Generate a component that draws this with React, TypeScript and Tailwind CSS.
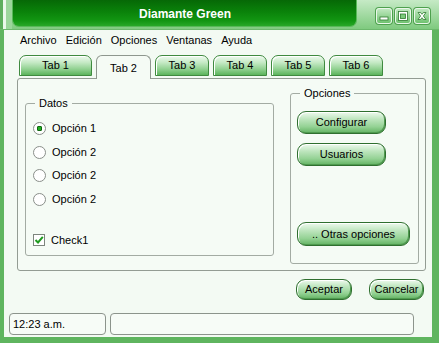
import React from "react";

const font = "font-['Liberation_Sans',Arial,sans-serif]";

function Radio({ checked }: { checked?: boolean }) {
  return (
    <span className="w-[13px] h-[13px] rounded-full border border-[#8a8f8a] bg-white flex items-center justify-center shrink-0">
      {checked && <span className="w-[5px] h-[5px] rounded-[1px] bg-[#22b022] border border-[#116611]" />}
    </span>
  );
}

function GreenButton({ label, w, h }: { label: string; w: string; h: string }) {
  return (
    <div
      className={`${w} ${h} rounded-[9px] border border-[#2f6f2f] bg-[linear-gradient(to_bottom,#eefaee_0%,#bde5bd_35%,#94d294_70%,#62b262_100%)] shadow-[inset_1px_1px_0_#ffffff,inset_-1px_-1px_0_#4f9a4f] flex items-center justify-center text-[11px] text-black`}
    >
      {label}
    </div>
  );
}

function Tab({ label, w, selected }: { label: string; w: string; selected?: boolean }) {
  if (selected) {
    return (
      <div
        className={`${w} h-[24px] -mb-px relative z-10 rounded-t-[6px] border border-b-0 border-[#8e978e] bg-[#f5fbf5] flex items-start justify-center pt-[4px] text-[11px] text-black`}
      >
        {label}
      </div>
    );
  }
  return (
    <div
      className={`${w} h-[21px] rounded-t-[7px] border border-[#3f8a3f] bg-[linear-gradient(to_bottom,#eefaee_0%,#c4e9c4_35%,#8fd08f_70%,#5cb45c_100%)] shadow-[inset_1px_1px_0_#ffffff] flex items-center justify-center text-[11px] text-black`}
    >
      {label}
    </div>
  );
}

function TitleButton({ kind }: { kind: "min" | "max" | "close" }) {
  return (
    <div className="w-[16px] h-[16px] rounded-[3px] border border-[#eaf7ea] bg-[linear-gradient(to_bottom,#bfe8bf,#6fc26f)] shadow-[0_0_0_1px_#4ea04e] flex items-center justify-center">
      <svg width="12" height="12" viewBox="0 0 12 12">
        {kind === "min" && (
          <rect x="2" y="7" width="8" height="3" fill="#ffffff" stroke="#2f7a2f" strokeWidth="0.8" />
        )}
        {kind === "max" && (
          <>
            <rect x="1.5" y="1.5" width="9" height="9" fill="#ffffff" stroke="#2f7a2f" strokeWidth="0.8" />
            <rect x="3.5" y="4" width="5" height="4.5" fill="#7ccb7c" stroke="#2f7a2f" strokeWidth="0.8" />
          </>
        )}
        {kind === "close" && (
          <path
            d="M2 2.5 L4.5 2.5 L6 4.3 L7.5 2.5 L10 2.5 L7.4 6 L10 9.5 L7.5 9.5 L6 7.7 L4.5 9.5 L2 9.5 L4.6 6 Z"
            fill="#ffffff"
            stroke="#2f7a2f"
            strokeWidth="0.8"
          />
        )}
      </svg>
    </div>
  );
}

export default function App() {
  return (
    <div className={`w-[439px] h-[343px] flex flex-col overflow-hidden ${font} bg-[#f3faf3]`}>
      {/* Title bar */}
      <div className="h-[30px] flex bg-[linear-gradient(to_bottom,#c6eac6,#7fca7f)] border-b border-[#6cb86c]">
        <div className="w-[12px] h-full flex">
          <div className="w-[3px] bg-[#5cae5c]" />
          <div className="w-[3px] bg-[#eaf8ea]" />
          <div className="flex-1 bg-[#9bd69b]" />
        </div>
        <div className="w-[345px] h-[27px] rounded-b-[7px] border border-t-0 border-[#58b858] bg-[linear-gradient(to_bottom,#066806_0%,#0a820a_45%,#129612_80%,#27a827_100%)] flex items-center justify-center">
          <span className="text-white font-bold text-[12px] pl-[1px] mt-[2px]">Diamante Green</span>
        </div>
        <div className="flex gap-[3px] ml-[19px] mt-[8px] items-start">
          <TitleButton kind="min" />
          <TitleButton kind="max" />
          <TitleButton kind="close" />
        </div>
      </div>

      {/* Body */}
      <div className="flex-1 flex flex-col border-l-[4px] border-r-[7px] border-b-[6px] border-l-[#5fb55f] border-r-[#5fb55f] border-b-[#5fb55f] bg-[#f3faf3] text-black">
        {/* Menu */}
        <div className="h-[20px] flex items-center gap-[9px] pl-[16px] text-[11px]">
          <span>Archivo</span>
          <span>Edición</span>
          <span>Opciones</span>
          <span>Ventanas</span>
          <span>Ayuda</span>
        </div>

        {/* Tabs */}
        <div className="mt-[5px] h-[23px] flex items-start gap-[4px] pl-[15px]">
          <Tab label="Tab 1" w="w-[73px]" />
          <Tab label="Tab 2" w="w-[55px]" selected />
          <Tab label="Tab 3" w="w-[54px]" />
          <Tab label="Tab 4" w="w-[54px]" />
          <Tab label="Tab 5" w="w-[54px]" />
          <Tab label="Tab 6" w="w-[54px]" />
        </div>

        {/* Panel */}
        <div className="ml-[13px] w-[409px] h-[193px] rounded-[3px] border border-[#939c93] bg-[#f5fbf5] flex items-start">
          {/* Datos */}
          <div className="relative ml-[7px] mt-[24px] w-[249px] h-[153px] rounded-[3px] border border-[#a3aba3] pt-[12px] pl-[7px] text-[11px]">
            <span className="absolute -top-[8px] left-[9px] px-[4px] bg-[#f5fbf5] leading-[14px]">Datos</span>
            <div className="h-[24px] flex items-center gap-[6px]">
              <Radio checked />
              <span>Opción 1</span>
            </div>
            <div className="h-[24px] flex items-center gap-[6px]">
              <Radio />
              <span>Opción 2</span>
            </div>
            <div className="h-[23px] flex items-center gap-[6px]">
              <Radio />
              <span>Opción 2</span>
            </div>
            <div className="h-[24px] flex items-center gap-[6px]">
              <Radio />
              <span>Opción 2</span>
            </div>
            <div className="mt-[17px] h-[24px] flex items-center gap-[6px]">
              <span className="w-[12px] h-[12px] border border-[#7d857d] bg-white flex items-center justify-center">
                <svg width="10" height="10" viewBox="0 0 10 10">
                  <path d="M1.5 5 L4 7.5 L8.8 1.8" fill="none" stroke="#1f9a1f" strokeWidth="2" />
                </svg>
              </span>
              <span>Check1</span>
            </div>
          </div>

          {/* Opciones */}
          <div className="relative ml-[16px] mt-[14px] w-[129px] h-[171px] rounded-[3px] border border-[#a3aba3] pt-[17px] pl-[6px] text-[11px]">
            <span className="absolute -top-[8px] left-[9px] px-[4px] bg-[#f5fbf5] leading-[14px]">Opciones</span>
            <GreenButton label="Configurar" w="w-[89px]" h="h-[23px]" />
            <div className="mt-[9px]">
              <GreenButton label="Usuarios" w="w-[89px]" h="h-[23px]" />
            </div>
            <div className="mt-[56px]">
              <GreenButton label=".. Otras opciones" w="w-[113px]" h="h-[24px]" />
            </div>
          </div>
        </div>

        {/* Bottom buttons */}
        <div className="mt-[8px] h-[21px] flex justify-end gap-[17px] pr-[8px]">
          <GreenButton label="Aceptar" w="w-[56px]" h="h-[21px]" />
          <GreenButton label="Cancelar" w="w-[55px]" h="h-[21px]" />
        </div>

        {/* Status bar */}
        <div className="mt-[13px] h-[22px] flex gap-[4px] pl-[5px] text-[11px]">
          <div className="w-[97px] h-full rounded-[4px] border border-[#8c948c] bg-[#f7fcf7] flex items-center pl-[3px]">
            12:23 a.m.
          </div>
          <div className="w-[304px] h-full rounded-[4px] border border-[#8c948c] bg-[#f7fcf7]" />
        </div>
      </div>
    </div>
  );
}
